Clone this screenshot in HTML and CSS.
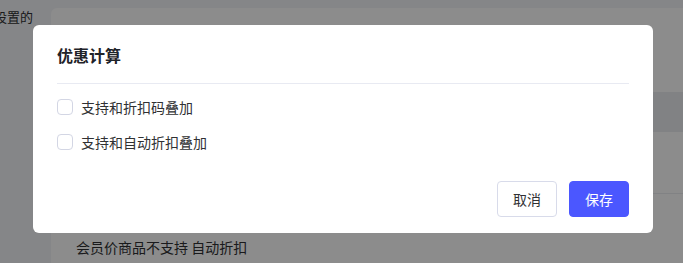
FILE: index.html
```html
<!DOCTYPE html>
<html lang="zh-CN">
<head>
    <meta charset="UTF-8">
    <title>优惠计算</title>
    <link rel="stylesheet" href="styles.css">
</head>
<body>
    <div class="page">
        <div class="side">
            <div class="side-text">设置的</div>
        </div>
        <div class="main">
            <div class="main-top"></div>
            <div class="table-head"></div>
            <div class="table-row"></div>
            <div class="note">会员价商品不支持 自动折扣</div>
        </div>
    </div>

    <div class="mask">
        <div class="dialog">
            <div class="dialog-header">优惠计算</div>
            <div class="dialog-body">
                <label class="check">
                    <span class="box"></span>
                    <span>支持和折扣码叠加</span>
                </label>
                <label class="check">
                    <span class="box"></span>
                    <span>支持和自动折扣叠加</span>
                </label>
            </div>
            <div class="dialog-footer">
                <button class="btn">取消</button>
                <button class="btn primary">保存</button>
            </div>
        </div>
    </div>
</body>
</html>
```

FILE: styles.css
```css
body {
    margin: 0;
    font-family: "Noto Sans CJK SC", "Noto Sans", sans-serif;
    background: #f2f4f7;
    overflow: hidden;
}
.page {
    display: flex;
    height: 263px;
}
.side {
    width: 51px;
    flex-shrink: 0;
    overflow: hidden;
}
.side-text {
    margin: 8px 0 0 -6px;
    font-size: 13px;
    line-height: 18px;
    color: #303133;
    white-space: nowrap;
}
.main {
    flex: 1;
    margin-top: 8px;
    background: #fff;
    border-radius: 6px 0 0 0;
}
.main-top {
    height: 84px;
}
.table-head {
    height: 40px;
    background: #ebedf0;
}
.table-row {
    height: 61px;
    border-bottom: 1px solid #ebedf0;
}
.note {
    padding: 43px 0 0 25px;
    font-size: 14px;
    line-height: 20px;
    color: #303133;
}

.mask {
    position: fixed;
    inset: 0;
    background: rgba(0, 0, 0, 0.45);
    display: flex;
    align-items: center;
    justify-content: center;
    padding: 0 0 5px 3px;
}
.dialog {
    width: 620px;
    background: #fff;
    border-radius: 6px;
    padding: 0 24px 16px;
    box-sizing: border-box;
}
.dialog-header {
    padding: 18px 0 16px;
    font-size: 16px;
    line-height: 24px;
    font-weight: bold;
    color: #1f2329;
    border-bottom: 1px solid #e8eaf2;
}
.dialog-body {
    padding-top: 12px;
}
.check {
    display: flex;
    align-items: center;
    height: 22px;
    margin-bottom: 13px;
    font-size: 14px;
    color: #303133;
}
.box {
    width: 14px;
    height: 14px;
    border: 1px solid #d3d6e4;
    border-radius: 4px;
    margin-right: 8px;
}
.dialog-footer {
    display: flex;
    justify-content: flex-end;
    gap: 12px;
    padding-top: 15px;
}
.btn {
    width: 60px;
    height: 36px;
    border: 1px solid #d8dbea;
    border-radius: 4px;
    background: #fff;
    color: #303133;
    font-family: inherit;
    font-size: 14px;
}
.btn.primary {
    background: #4b57ff;
    border-color: #4b57ff;
    color: #fff;
}
```
